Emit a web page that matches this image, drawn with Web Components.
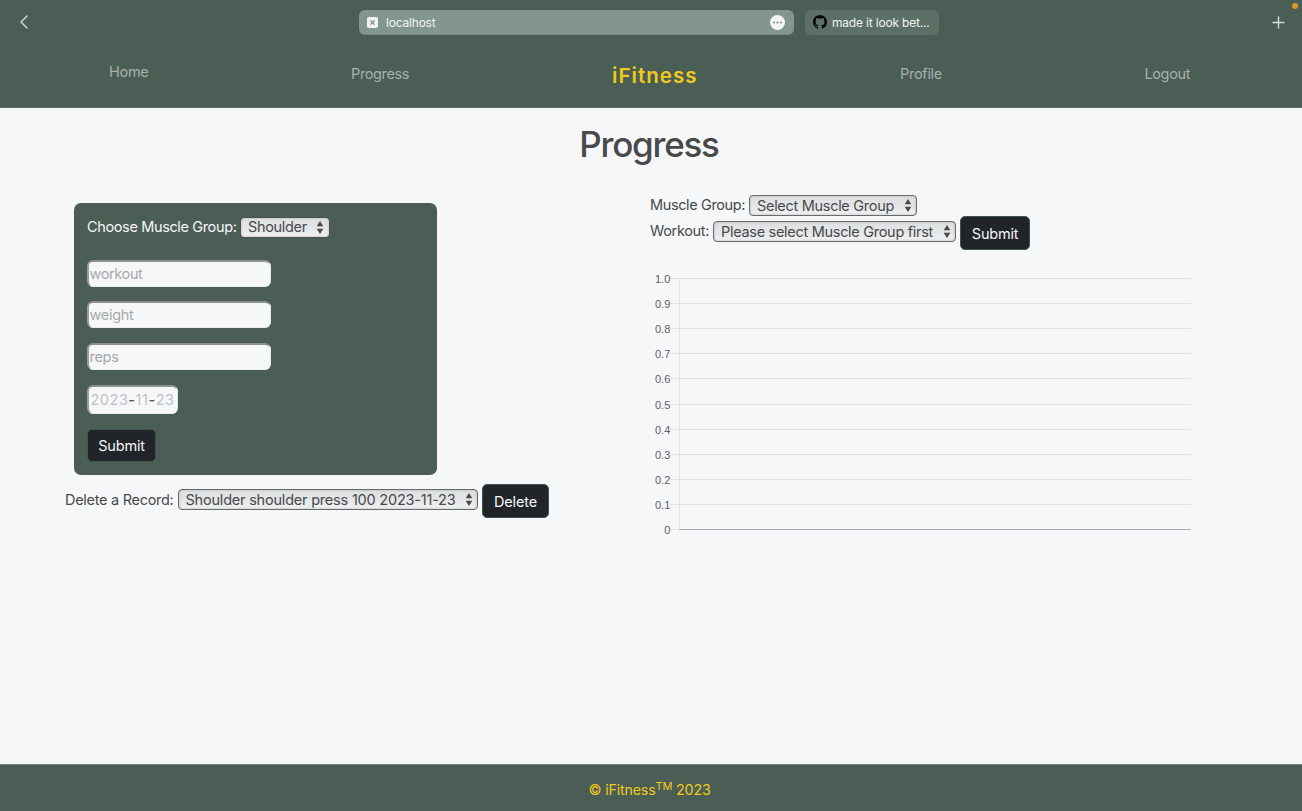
<!DOCTYPE html>
<html lang="en">
<head>
<meta charset="utf-8">
<title>iFitness</title>
<style>
html,body{margin:0;height:100%}
body{font-family:Inter,"Liberation Sans",sans-serif;font-size:14.5px;color:#48494b;--green:#4a5e56;--yellow:#f2cb18;overflow:hidden}
</style>
</head>
<body>
<fitness-app></fitness-app>
<script>
const define = (name, html, setup) => customElements.define(name, class extends HTMLElement {
  connectedCallback() {
    if (this.shadowRoot) return;
    const t = document.createElement('template');
    t.innerHTML = html;
    this.attachShadow({mode: 'open'}).append(t.content.cloneNode(true));
    if (setup) setup(this, this.shadowRoot);
  }
});

/* Text tracked so that it fills the width given in its w attribute */
define('tracked-text', `<style>:host{display:inline-block;white-space:pre;flex:none}span{display:inline-block}</style><span><slot></slot></span>`, (el, root) => {
  const w = +el.getAttribute('w');
  const span = root.querySelector('span');
  const fit = () => {
    span.style.letterSpacing = '0';
    const natural = span.getBoundingClientRect().width;
    const n = el.textContent.length;
    if (natural) span.style.letterSpacing = ((w - natural) / n) + 'px';
  };
  el.style.width = w + 'px';
  fit();
});

define('browser-bar', `<style>
:host{display:grid;grid-template-columns:359px 435px 11px 134px 1fr;height:45px;align-items:center;font-size:12px;color:#f1f4f2;line-height:16px;position:relative}
svg{display:block;flex:none}
.back{padding:0 0 1px 19px}
.tab{box-sizing:border-box;height:25px;border-radius:6px;display:flex;align-items:center;background:#82968e;border-bottom:1px solid #74887f}
.tab.on{padding:0 9px 0 8px}.tab.on svg:last-child{margin-left:auto}
.tab.on tracked-text{margin-left:8px}
.tab tracked-text{padding-top:1px}
.tab.off{background:#5c7068;border-color:#5c7068;padding-left:8px;grid-column:4;gap:5px}
.plus{justify-self:end;padding:0 17px 1px 0}
.dot{position:absolute;right:4px;top:3px;width:6px;height:6px;border-radius:50%;background:#e0952b}
</style>
<div class="back"><svg width="10" height="14" viewBox="0 0 10 14"><path d="M8 1 2 7l6 6" fill="none" stroke="#cfe0d8" stroke-width="1.4" stroke-linecap="round" stroke-linejoin="round"/></svg></div>
<div class="tab on">
<svg width="11" height="11" viewBox="0 0 11 11"><rect width="11" height="11" rx="1.8" fill="#f0f3f1"/><path d="m3.4 3.4 4.2 4.2m0-4.2L3.4 7.6" stroke="#788c84" stroke-width="1.3"/></svg>
<tracked-text w="49.5">localhost</tracked-text>
<svg width="15" height="15" viewBox="0 0 15 15"><circle cx="7.5" cy="7.5" r="7.5" fill="#f3f5f4"/><g fill="#788c84"><circle cx="4" cy="7.5" r="1"/><circle cx="7.5" cy="7.5" r="1"/><circle cx="11" cy="7.5" r="1"/></g></svg>
</div>
<div class="tab off">
<svg width="14" height="14" viewBox="0 0 16 16"><path fill="#050706" d="M8 0C3.58 0 0 3.58 0 8c0 3.54 2.29 6.53 5.47 7.59.4.07.55-.17.55-.38 0-.19-.01-.82-.01-1.49-2.01.37-2.53-.49-2.69-.94-.09-.23-.48-.94-.82-1.13-.28-.15-.68-.52-.01-.53.63-.01 1.08.58 1.23.82.72 1.21 1.87.87 2.33.66.07-.52.28-.87.51-1.07-1.78-.2-3.64-.89-3.64-3.95 0-.87.31-1.59.82-2.15-.08-.2-.36-1.02.08-2.12 0 0 .67-.21 2.2.82.64-.18 1.32-.27 2-.27s1.36.09 2 .27c1.53-1.04 2.2-.82 2.2-.82.44 1.1.16 1.92.08 2.12.51.56.82 1.27.82 2.15 0 3.07-1.87 3.75-3.65 3.95.29.25.54.73.54 1.48 0 1.07-.01 1.93-.01 2.2 0 .21.15.46.55.38A8.01 8.01 0 0 0 16 8c0-4.42-3.58-8-8-8z"/></svg>
<tracked-text w="97.5">made it look bet...</tracked-text>
</div>
<div class="plus"><svg width="13" height="13" viewBox="0 0 13 13"><path d="M6.5.5v12M.5 6.5h12" stroke="#cfe0d8" stroke-width="1.4"/></svg></div>
<span class="dot"></span>`);

define('site-nav', `<style>
:host{display:grid;grid-template-columns:109px 242px 261px 288px 244.5px 1fr;height:58px;align-items:center;color:#a7b0ab;font-size:14.5px;line-height:20px}
.home{grid-column:2;padding-bottom:4px}
.brand{color:var(--yellow);font-size:20.5px;font-weight:600;line-height:24px;padding-top:4px}
</style>
<div class="home"><tracked-text w="39.5">Home</tracked-text></div>
<tracked-text w="58">Progress</tracked-text>
<div class="brand"><tracked-text w="85.5">iFitness</tracked-text></div>
<tracked-text w="42">Profile</tracked-text>
<tracked-text w="45.5">Logout</tracked-text>`);

/* Drop-down with its label passed in */
define('ui-select', `<style>
:host{display:flex;flex:none;box-sizing:border-box;height:21px;border:1px solid #66696a;border-radius:4px;background:linear-gradient(#dddfe0,#e5e7e8 60%,#f2f3f4);box-shadow:inset 0 0 3px #b5b7b8;align-items:center;justify-content:space-between;padding:0 4.5px 0 7px;line-height:18px}
svg{display:block;flex:none}
</style><slot></slot><svg width="8" height="13" viewBox="0 0 8 13"><path d="M4 0 7.3 5.3H.7zM4 13 .7 7.7h6.6z" fill="#48494b"/></svg>`);

define('ui-button', `<style>
:host{display:flex;flex:none;box-sizing:border-box;background:#212429;color:#f6f7f9;border:1px solid #3e554c;border-radius:5px;align-items:center;justify-content:center;line-height:20px;padding-top:1px}
</style><slot></slot>`);

define('ui-field', `<style>
:host{display:flex;box-sizing:border-box;width:184px;height:27px;border-radius:6px;background:#f6f7f9;border:2px solid;border-color:#8f9190 #e8eae9 #eceeed #9b9d9c;border-right-width:1px;border-bottom-width:1px;align-items:center;padding-left:.5px;color:#a7a9a9;line-height:20px}
</style><slot></slot>`);

define('record-card', `<style>
:host{display:block;box-sizing:border-box;width:362.5px;height:272px;margin-left:9px;border-radius:7px;background:var(--green);padding:14px 13px 0}
.row{display:flex;align-items:center;height:20px;gap:4px;color:#f6f7f9;margin-bottom:22.6px}
.row tracked-text{line-height:18px}
.row ui-select{width:90px;color:#48494b;border-color:#4c4e4f;margin-left:-.6px}
ui-field{margin-bottom:14.8px}
.date{width:91px;height:29px;color:#c0c2c3;padding-left:1.5px}
b{color:#55585a;font-weight:500}
ui-button{width:69px;height:33px}
</style>
<div class="row"><tracked-text w="149.5">Choose Muscle Group:</tracked-text><ui-select><tracked-text w="59">Shoulder</tracked-text></ui-select></div>
<ui-field><tracked-text w="53">workout</tracked-text></ui-field>
<ui-field><tracked-text w="44">weight</tracked-text></ui-field>
<ui-field><tracked-text w="29">reps</tracked-text></ui-field>
<ui-field class="date"><tracked-text w="84">2023<b>-</b>11<b>-</b>23</tracked-text></ui-field>
<ui-button><tracked-text w="46.5">Submit</tracked-text></ui-button>`);

define('delete-record', `<style>
:host{display:flex;height:34px;margin-top:9px;gap:4px}
.label{padding-top:6px;line-height:20px}
ui-select{width:300.7px;margin-top:5px}
ui-button{width:66.5px;height:34px}
</style>
<tracked-text class="label" w="108.5">Delete a Record:</tracked-text>
<ui-select><tracked-text w="270">Shoulder shoulder press 100 2023-11-23</tracked-text></ui-select>
<ui-button><tracked-text w="43">Delete</tracked-text></ui-button>`);

define('chart-filter', `<style>
:host{display:block;height:70px}
.row{display:flex;height:21px;gap:4px;line-height:20px}
.two{height:34px}
.two>:not(ui-button){margin-top:5px}
.one ui-select{width:168px}.two ui-select{width:243.3px}
ui-button{width:69.5px;height:34px}
</style>
<div class="row one"><tracked-text w="95">Muscle Group:</tracked-text><ui-select><tracked-text w="137">Select Muscle Group</tracked-text></ui-select></div>
<div class="row two"><tracked-text w="59">Workout:</tracked-text><ui-select><tracked-text w="212">Please select Muscle Group first</tracked-text></ui-select><ui-button><tracked-text w="46.5">Submit</tracked-text></ui-button></div>`);

define('progress-chart', `<style>
:host{display:block}svg{display:block}text{font:11px "Liberation Sans",sans-serif;fill:#5f6062;text-anchor:end}
</style><svg width="560" height="280" viewBox="0 0 560 280"></svg>`, (el, root) => {
  let out = '<path d="M29.5 13.5v251" stroke="#e0e2e4"/>';
  for (let i = 0; i <= 10; i++) {
    const y = 13.5 + Math.round(i * 25.1);
    const label = i === 10 ? '0' : (1 - i / 10).toFixed(1);
    out += `<path d="M20 ${y}H541" stroke="#dfe1e3"/>`;
    if (i === 10) out += `<path d="M29.5 ${y}H541" stroke="#a8aaad"/>`;
    out += `<text x="20.3" y="${y + 4}">${label}</text>`;
  }
  root.querySelector('svg').innerHTML = out;
});

define('site-footer', `<style>
:host{display:flex;box-sizing:border-box;height:47px;border-top:1px solid #70817a;background:var(--green);color:var(--yellow);justify-content:center;padding:15px 3px 0 0;font-size:14.2px;line-height:20px}
sup{font-size:11px;line-height:0;vertical-align:baseline;position:relative;top:-5px}
</style><tracked-text w="122">© iFitness<sup>TM</sup> 2023</tracked-text>`);

define('fitness-app', `<style>
:host{display:flex;flex-direction:column;height:811px;background:#f6f7f9}
header{background:var(--green);height:108px;box-sizing:border-box;border-bottom:1px solid #5e7068}
main{flex:1}
h1{margin:0;padding:13px 4px 0 0;height:73px;box-sizing:border-box;font-size:35px;line-height:46px;font-weight:500;text-align:center}
.cols{display:grid;grid-template-columns:585px 1fr;padding-left:65px}
.left{padding-top:22px}.right{padding-top:14px}
</style>
<header><browser-bar></browser-bar><site-nav></site-nav></header>
<main><h1><tracked-text w="139.5">Progress</tracked-text></h1>
<div class="cols"><div class="left"><record-card></record-card><delete-record></delete-record></div>
<div class="right"><chart-filter></chart-filter><progress-chart></progress-chart></div></div></main>
<site-footer></site-footer>`);
</script>
</body>
</html>
